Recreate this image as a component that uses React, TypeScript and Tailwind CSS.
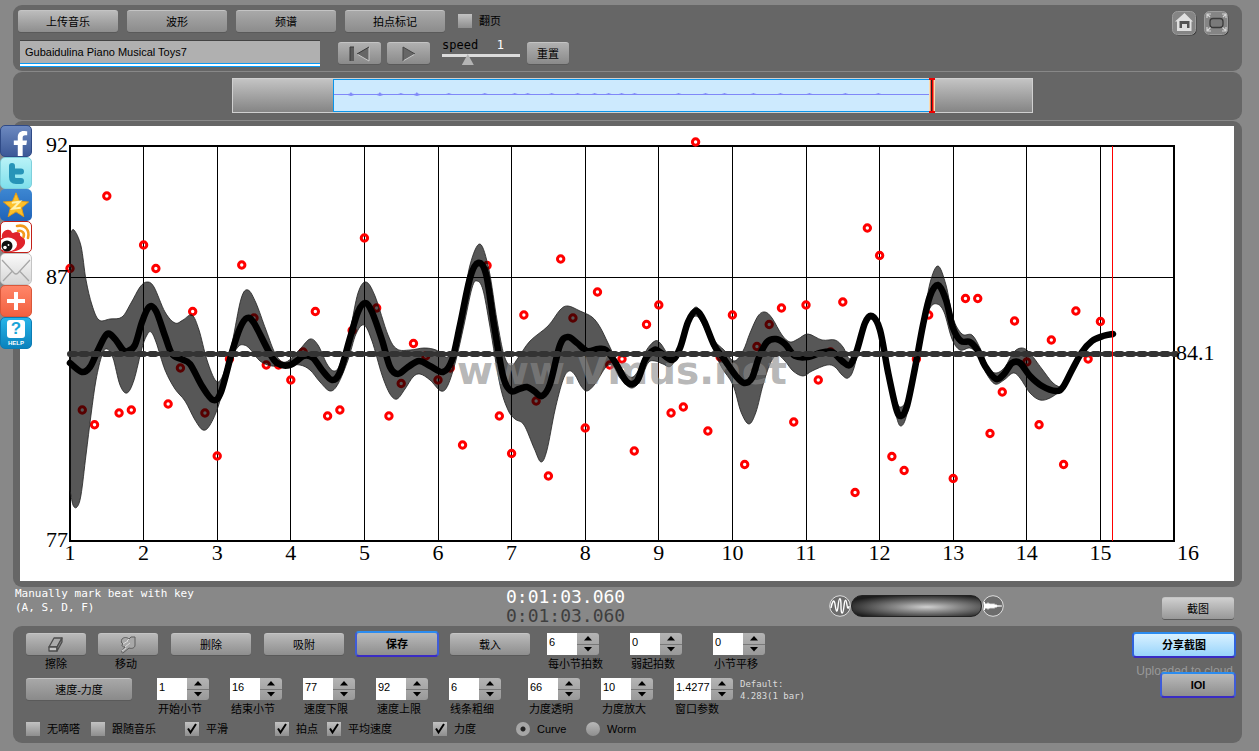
import { useState } from "react";
import type { ReactNode } from "react";
import { FaFacebookF } from "react-icons/fa";

type Point = [number, number];

type StepperField = {
  id: string;
  label: string;
  value: string;
  wide?: boolean;
};

type ToggleField = {
  id: string;
  label: string;
  checked: boolean;
  width: string;
};

// chart geometry, one bar is 73.6 units wide and holds 6 beats
const LEFT = 70;
const RIGHT = 1174;
const TOP = 146;
const BOTTOM = 541;
const BAR = (RIGHT - LEFT) / 15;

const beats: (number | null)[] = [
  268.5, 410, 424.7, 196, 413, 410, 245, 268.5, 404, 368, 311.5, 413,
  456, 359, 265, 318, 365, 365, 380, 352, 311.5, 416, 410, 330.5,
  238, 308, 416, 383.5, 343.5, 356, 380, 368, 445, null, 265.5, 416,
  453.5, 315, 401, 476, 259, 318, 428, 292, 365, 359, 451, 324.5,
  305, 413, 407, 142, 431, 357, 315, 464.5, 346.5, 324.5, 308, 422,
  305, 380, 352, 302, 492.5, 228, 255.5, 456.5, 470.5, 359, 315, null,
  478.5, 298.5, 298.5, 433.5, 392, 321, 362, 424.7, 340, 464.5, 311, 359,
  321.5
];

const tempo: Point[] = [
  [70, 363], [82, 372], [90, 367], [98, 350], [107, 334], [115, 339], [123, 350], [128, 351], [135, 345], [142, 322],
  [149, 307], [156, 311], [165, 336], [172, 354], [181, 359], [190, 364], [202, 386], [213, 400], [221, 392], [232, 352],
  [240, 328], [247, 318], [254, 323], [268, 350], [277, 363], [290, 365], [304, 356], [313, 358], [322, 370], [332, 380],
  [340, 372], [350, 338], [358, 312], [365, 303], [372, 312], [382, 340], [390, 367], [398, 374], [408, 367], [419, 361],
  [430, 366], [443, 372], [452, 360], [460, 325], [470, 278], [478, 263], [486, 274], [494, 325], [503, 376], [511, 391],
  [519, 389], [527, 387], [534, 391], [542, 396], [550, 384], [560, 345], [568, 337], [577, 343], [587, 351], [598, 349],
  [606, 350], [615, 362], [627, 382], [637, 381], [645, 360], [654, 350], [660, 352], [672, 360], [680, 348], [688, 322],
  [696, 311], [704, 321], [714, 345], [724, 359], [736, 376], [744, 383], [752, 378], [759, 357], [767, 342], [776, 339],
  [785, 344], [795, 356], [808, 357], [820, 353], [832, 352], [842, 361], [850, 365], [857, 350], [865, 323], [872, 316],
  [880, 330], [888, 372], [896, 408], [901, 416], [907, 406], [915, 368], [923, 325], [930, 296], [938, 285], [946, 300],
  [953, 328], [961, 341], [970, 342], [978, 351], [985, 366], [996, 379], [1004, 374], [1012, 363], [1020, 363], [1030, 376],
  [1042, 386], [1056, 391], [1063, 387], [1072, 370], [1082, 352], [1092, 341], [1103, 336], [1113, 334]
];

const bandTop: Point[] = [
  [70, 234], [74, 230], [81, 246], [86, 280], [92, 305], [99, 320], [110, 319], [122, 317], [131, 303], [140, 287],
  [147, 282], [154, 287], [165, 312], [175, 323], [183, 320], [192, 315], [199, 330], [207, 360], [216, 381], [223, 375],
  [232, 343], [241, 299], [248, 290], [256, 303], [266, 330], [276, 355], [286, 362], [300, 349], [310, 339], [318, 345],
  [327, 364], [334, 371], [340, 364], [350, 330], [358, 293], [366, 282], [375, 296], [388, 335], [397, 349], [410, 350],
  [424, 348], [436, 350], [448, 357], [456, 340], [462, 310], [470, 265], [480, 244], [489, 270], [497, 320], [504, 355],
  [511, 366], [518, 358], [530, 341], [548, 326], [560, 310], [568, 306], [580, 311], [592, 317], [600, 327], [608, 343],
  [618, 363], [630, 377], [638, 371], [646, 351], [655, 341], [661, 344], [672, 359], [680, 347], [688, 320], [696, 307],
  [704, 319], [714, 340], [724, 350], [734, 361], [743, 351], [750, 333], [758, 316], [765, 312], [772, 318], [782, 335],
  [790, 342], [798, 339], [808, 334], [822, 340], [835, 340], [843, 347], [850, 359], [857, 348], [865, 321], [872, 314],
  [880, 328], [888, 370], [896, 400], [901, 407], [907, 398], [915, 366], [923, 323], [930, 283], [938, 266], [946, 285],
  [953, 318], [962, 334], [972, 335], [980, 348], [988, 367], [996, 373], [1005, 367], [1013, 353], [1021, 348], [1029, 352],
  [1042, 369], [1053, 383], [1062, 388]
];

const bandBottom: Point[] = [
  [70, 490], [73, 505], [77, 507], [81, 495], [86, 455], [91, 415], [96, 380], [102, 355], [107, 349], [113, 358],
  [120, 385], [127, 393], [134, 380], [142, 348], [147, 335], [151, 332], [156, 342], [165, 370], [175, 389], [185, 401],
  [195, 420], [203, 430], [210, 425], [219, 404], [230, 362], [238, 347], [244, 345], [250, 349], [260, 361], [272, 366],
  [286, 365], [300, 365], [310, 370], [320, 382], [330, 391], [338, 384], [348, 360], [356, 334], [364, 325], [372, 341],
  [382, 375], [390, 394], [397, 399], [405, 389], [413, 377], [420, 374], [430, 380], [441, 391], [448, 385], [456, 360],
  [464, 325], [472, 288], [477, 281], [483, 290], [490, 327], [500, 385], [508, 410], [515, 419], [524, 425], [534, 448],
  [541, 462], [547, 450], [555, 410], [563, 380], [569, 371], [575, 375], [581, 386], [587, 391], [595, 384], [606, 367],
  [613, 366], [620, 378], [631, 388], [640, 381], [648, 363], [655, 361], [663, 364], [671, 366], [680, 350], [688, 326],
  [696, 316], [704, 327], [714, 351], [722, 368], [733, 385], [741, 412], [749, 424], [756, 412], [763, 385], [770, 364],
  [777, 355], [785, 361], [793, 371], [803, 376], [812, 371], [827, 365], [835, 367], [842, 375], [848, 378], [854, 368],
  [864, 328], [872, 319], [879, 332], [888, 375], [896, 415], [901, 426], [907, 414], [915, 372], [923, 329], [930, 308],
  [937, 304], [944, 312], [952, 339], [960, 350], [970, 348], [978, 355], [986, 373], [995, 384], [1004, 380], [1013, 373],
  [1020, 378], [1030, 393], [1040, 400], [1050, 398], [1062, 390]
];

const curve = (pts: Point[]) => {
  let d = "";
  for (let i = 0; i < pts.length - 1; i++) {
    const a = pts[Math.max(i - 1, 0)];
    const b = pts[i];
    const c = pts[i + 1];
    const e = pts[Math.min(i + 2, pts.length - 1)];
    d += `C${b[0] + (c[0] - a[0]) / 6} ${b[1] + (c[1] - a[1]) / 6} ${c[0] - (e[0] - b[0]) / 6} ${c[1] - (e[1] - b[1]) / 6} ${c[0]} ${c[1]}`;
  }
  return d;
};

const tempoPath = `M${tempo[0].join(" ")}${curve(tempo)}`;
const bandLow = [...bandBottom].reverse();
const bandPath = `M${bandTop[0].join(" ")}${curve(bandTop)}L${bandLow[0].join(" ")}${curve(bandLow)}Z`;

const meterFields: StepperField[] = [
  { id: "beats", label: "每小节拍数", value: "6" },
  { id: "pickup", label: "弱起拍数", value: "0" },
  { id: "shift", label: "小节平移", value: "0" }
];

const rangeFields: StepperField[] = [
  { id: "start", label: "开始小节", value: "1" },
  { id: "end", label: "结束小节", value: "16" },
  { id: "low", label: "速度下限", value: "77" },
  { id: "high", label: "速度上限", value: "92" },
  { id: "line", label: "线条粗细", value: "6" }
];

const dynamicFields: StepperField[] = [
  { id: "alpha", label: "力度透明", value: "66" },
  { id: "zoom", label: "力度放大", value: "10" },
  { id: "window", label: "窗口参数", value: "1.4277", wide: true }
];

const toggles: ToggleField[] = [
  { id: "mute", label: "无嘀嗒", checked: false, width: "w-[65px]" },
  { id: "follow", label: "跟随音乐", checked: false, width: "w-[94px]" },
  { id: "smooth", label: "平滑", checked: true, width: "w-[90px]" },
  { id: "points", label: "拍点", checked: true, width: "w-[52px]" },
  { id: "average", label: "平均速度", checked: true, width: "w-[106px]" },
  { id: "dynamics", label: "力度", checked: true, width: "w-[83px]" }
];

// [x, size] of the louder spots in the overview
const peaks: Point[] = [
  [17, 2], [46, 2], [67, 1], [83, 2], [115, 1], [151, 1], [181, 1], [194, 1], [218, 1], [244, 1],
  [261, 1], [275, 1], [288, 1], [301, 1], [345, 1], [372, 1], [391, 1], [420, 1], [447, 1], [476, 1], [512, 1], [545, 1]
];

function GreyButton({ children, className, label }: { children: ReactNode; className: string; label?: string }) {
  return (
    <button
      type="button"
      aria-label={label}
      className={`flex h-[22px] shrink-0 items-center justify-center rounded-[3px] border-t border-[#c4c4c4] bg-linear-to-b text-[11px] leading-4 text-black shadow-[0_1px_0_#5a5a5a] ${className}`}
    >
      {children}
    </button>
  );
}

function Stepper({ field }: { field: StepperField }) {
  const [value, setValue] = useState(field.value);
  const step = (by: number) => setValue(String(Number(value) + by));

  return (
    <div>
      <div className="flex h-[22px]">
        <input
          id={field.id}
          value={value}
          onChange={(e) => setValue(e.target.value)}
          className={`h-[22px] bg-white pb-1 pl-0.5 text-[11px] leading-4 text-black outline-none ${field.wide ? "w-[37px]" : "w-[30px]"}`}
        />
        <div className="flex w-[22px] flex-col overflow-hidden rounded-r-[3px] bg-linear-to-b from-[#b4b4b4] to-[#999]">
          <button type="button" aria-label={`${field.label} +`} onClick={() => step(1)} className="flex flex-1 items-center justify-center border-b border-[#787878]">
            <svg width="8" height="5"><path d="M4 0 8 4.500H0Z" /></svg>
          </button>
          <button type="button" aria-label={`${field.label} -`} onClick={() => step(-1)} className="flex flex-1 items-center justify-center">
            <svg width="8" height="5"><path d="M4 4.500 8 0H0Z" /></svg>
          </button>
        </div>
      </div>
      <label htmlFor={field.id} className="mt-px block whitespace-nowrap pl-px text-[11px] leading-4">{field.label}</label>
    </div>
  );
}

function Check({ id, label, checked }: { id: string; label: string; checked: boolean }) {
  return (
    <label htmlFor={id} className="relative flex items-center gap-[7px] whitespace-nowrap text-[11px] leading-[14px]">
      <input id={id} type="checkbox" defaultChecked={checked} className="peer h-[14px] w-[14px] appearance-none bg-linear-to-b from-[#c2c2c2] to-[#8e8e8e]" />
      <svg width="14" height="14" viewBox="0 0 14 14" className="pointer-events-none absolute left-0 top-0 hidden peer-checked:block">
        <path d="M3 6.500 5.500 10.500 11 2" fill="none" stroke="#000" strokeWidth="2" />
      </svg>
      {label}
    </label>
  );
}

function Radio({ id, label, checked }: { id: string; label: string; checked: boolean }) {
  return (
    <label htmlFor={id} className="flex w-[70px] items-center gap-[7px] text-[11px] leading-[14px]">
      <input
        id={id}
        type="radio"
        name="view"
        defaultChecked={checked}
        className="h-[14px] w-[14px] appearance-none rounded-full bg-linear-to-b from-[#b8b8b8] to-[#8e8e8e] checked:bg-[radial-gradient(circle,#222_2px,#a6a6a6_3px)]"
      />
      {label}
    </label>
  );
}

function Chart() {
  const bars = Array.from({ length: 14 }, (_, i) => i + 2);

  return (
    <svg viewBox="20 126 1214 455" className="block w-full bg-white" fontFamily="'Liberation Serif', serif" fontSize="22" role="img" aria-label="tempo curve">
      <g stroke="#000" fill="none" shapeRendering="crispEdges">
        <path d={`M${LEFT} 277.500H${RIGHT}`} />
        {bars.map((n) => (
          <path key={n} d={`M${Math.floor(LEFT + (n - 1) * BAR) + 0.5} ${TOP}V${BOTTOM}`} />
        ))}
        <rect x={LEFT} y={TOP} width={RIGHT - LEFT} height={BOTTOM - TOP} strokeWidth="2" />
      </g>
      <g fill="none" stroke="#f00" strokeWidth="3">
        {beats.map((y, i) => y !== null && <circle key={i} cx={LEFT + (i * BAR) / 6} cy={y} r="3.200" />)}
      </g>
      <path d={bandPath} fill="#000" fillOpacity="0.66" stroke="#222" strokeOpacity="0.8" />
      <text x="457" y="384" fontFamily="'DejaVu Sans', Verdana, sans-serif" fontSize="39" fontWeight="700" fill="#888" fillOpacity="0.62">www.Vmus.net</text>
      <path d={tempoPath} fill="none" stroke="#000" strokeWidth="6.500" strokeLinecap="round" strokeLinejoin="round" />
      <path d="M70 354H1176" stroke="#333" strokeWidth="6" strokeLinecap="round" strokeDasharray="5 6.500" />
      <path d="M70 354H1176" stroke="#333" strokeWidth="4" />
      <path d="M1112.500 146V541" stroke="#f00" shapeRendering="crispEdges" />
      <g textAnchor="end">
        <text x="68" y="152">92</text>
        <text x="68" y="284">87</text>
        <text x="68" y="547">77</text>
      </g>
      <text x="1176" y="360">84.1</text>
      <text x="1177" y="560">16</text>
      <g textAnchor="middle">
        <text x="70" y="560">1</text>
        {bars.map((n) => (
          <text key={n} x={LEFT + (n - 1) * BAR} y="560">{n}</text>
        ))}
      </g>
    </svg>
  );
}

function ShareBar() {
  const tile = "flex h-8 w-8 justify-center overflow-hidden rounded-[5px]";

  return (
    <nav className="absolute left-0 top-[125px] flex flex-col">
      <a href="#facebook" aria-label="Facebook" className={`${tile} items-end border border-[#2f4a86] bg-linear-to-b from-[#6d89c0] to-[#3c5997] pl-2`}>
        <FaFacebookF size={25} color="#fff" className="shrink-0" />
      </a>
      <a href="#twitter" aria-label="Twitter" className={`${tile} items-center border border-[#7ed0dc] bg-linear-to-b from-[#b8f2f7] to-[#7fe0ec]`}>
        <svg width="28" height="28" viewBox="0 0 28 28" fill="none" stroke="#2794b8" strokeWidth="6" strokeLinecap="round" strokeLinejoin="round">
          <path d="M10 7V18Q10 22 14 22H19M10 12.500H19" />
        </svg>
      </a>
      <a href="#qzone" aria-label="Qzone" className={`${tile} items-center bg-linear-to-b from-[#3d87d2] to-[#1f63b8]`}>
        <svg width="28" height="28" viewBox="0 0 30 30">
          <path d="M15 2 18.700 11 28.500 11.700 21 18 23.400 27.500 15 22.300 6.600 27.500 9 18 1.500 11.700 11.300 11Z" fill="#fdc02a" stroke="#e59a13" />
          <path d="M10.500 12.500 19 11.500 11.500 19 20 18" fill="none" stroke="#fff3b0" strokeWidth="2.200" />
        </svg>
      </a>
      <a href="#weibo" aria-label="Weibo" className={`${tile} items-center border border-[#c22018] bg-white`}>
        <svg width="30" height="30" viewBox="1 1 30 30">
          <path d="M2 17C1 12 5 8 9 9C12 9 11 12 13 12C17 10 21 11 20 14C20 16 25 16 25 20C26 26 19 30 11 31H1V17Z" fill="#e0242b" />
          <ellipse cx="8" cy="23.500" rx="9" ry="7" fill="#fff" />
          <circle cx="7" cy="25" r="5.500" fill="#111" />
          <circle cx="5" cy="26.500" r="1.800" fill="#fff" />
          <circle cx="8.500" cy="24" r="0.900" fill="#fff" />
          <path d="M17 5C25 3 30 9 28 17M18 10C22 9 25 12 23.500 16" fill="none" stroke="#f39a1c" strokeWidth="2.600" strokeLinecap="round" />
        </svg>
      </a>
      <a href="#mail" aria-label="Mail" className={`${tile} items-center border border-[#c4c4c4] bg-linear-to-b from-[#fafafa] to-[#d6d6d6]`}>
        <svg width="30" height="30" viewBox="0 0 30 30" fill="none" stroke="#a8a8a8" strokeWidth="1.300">
          <path d="M1 6 13 19Q15 21 17 19L29 6M2 27 11.500 17M28 27 18.500 17" />
        </svg>
      </a>
      <a href="#more" aria-label="More" className={`${tile} items-center border border-[#d9573a] bg-linear-to-b from-[#ff8568] to-[#f2603f]`}>
        <svg width="20" height="20" viewBox="0 0 20 20" stroke="#fff" strokeWidth="4"><path d="M10 1V19M1 10H19" /></svg>
      </a>
      <a href="#help" className={`${tile} flex-col items-center border border-[#0b7cb4] bg-linear-to-b from-[#27b4e8] to-[#0a82bd]`}>
        <span className="flex h-[18px] w-[18px] items-center justify-center rounded-[3px] bg-white text-[17px] font-bold leading-none text-[#1aa5d8]">?</span>
        <span className="mt-px text-[6px] font-bold leading-[8px] text-white">HELP</span>
      </a>
    </nav>
  );
}

export default function App() {
  const [title, setTitle] = useState("Gubaidulina Piano Musical Toys7");

  return (
    <div className="relative min-h-screen bg-[#888] pb-2 pl-[13px] pr-[17px] pt-[5px] font-['Liberation_Sans','Noto_Sans_CJK_SC',sans-serif] text-black">
      <header className="flex justify-between rounded-[9px] bg-[#666] pb-[3px] pl-[5px] pr-[13px] pt-[5px]">
        <div>
          <div className="flex items-center gap-[9px]">
            <GreyButton className="w-[100px] from-[#bcbcbc] to-[#8e8e8e] text-xs">上传音乐</GreyButton>
            <GreyButton className="w-[100px] from-[#a9a9a9] to-[#8c8c8c]">波形</GreyButton>
            <GreyButton className="w-[100px] from-[#a9a9a9] to-[#8c8c8c]">频谱</GreyButton>
            <GreyButton className="w-[100px] from-[#a9a9a9] to-[#8c8c8c]">拍点标记</GreyButton>
            <div className="pl-1">
              <Check id="turn" label="翻页" checked={false} />
            </div>
          </div>
          <div className="mt-2 flex h-7 items-start">
            <input
              aria-label="title"
              value={title}
              onChange={(e) => setTitle(e.target.value)}
              className="ml-0.5 h-[27px] w-[300px] border-b border-t border-b-[#0a9bf5] border-t-[#444] bg-[#b0b0b0] pb-[3px] pl-[5px] text-[11px] leading-4 shadow-[inset_0_-2px_0_#fff,inset_0_-3px_0_#0a9bf5] outline-none"
            />
            <div className="ml-[18px] mt-0.5 flex gap-1.5">
              <GreyButton label="rewind" className="w-[43px] from-[#b0b0b0] to-[#8a8a8a]">
                <svg width="22" height="16" viewBox="0 0 22 16">
                  <path d="M1 1H5V15H1Z" fill="#5a5a5a" />
                  <path d="M20 1V15L8 8Z" fill="#666" />
                  <path d="M8 8 20 15V1" fill="none" stroke="#c8c8c8" />
                  <path d="M1 15V1H5M20 1 8 8" fill="none" stroke="#383838" />
                </svg>
              </GreyButton>
              <GreyButton label="play" className="w-[43px] from-[#b0b0b0] to-[#8a8a8a]">
                <svg width="16" height="16" viewBox="0 0 16 16">
                  <path d="M2 1V15L14 8Z" fill="#666" />
                  <path d="M2 15 14 8" stroke="#c8c8c8" />
                  <path d="M14 8 2 1V15" fill="none" stroke="#444" />
                </svg>
              </GreyButton>
            </div>
            <div className="ml-3 w-[78px]">
              <div className="flex justify-between pr-4 font-['DejaVu_Sans_Mono',monospace] text-[12px] leading-[10px]">
                <label htmlFor="speed">speed</label>
                <output htmlFor="speed" className="text-white">1</output>
              </div>
              <input
                id="speed"
                type="range"
                min="0"
                max="3"
                step="0.1"
                defaultValue="0.9"
                className="mt-1 block h-3 w-full appearance-none bg-transparent [&::-webkit-slider-runnable-track]:-mt-[9px] [&::-webkit-slider-runnable-track]:h-[3px] [&::-webkit-slider-runnable-track]:bg-[#dcdcdc] [&::-webkit-slider-thumb]:h-[11px] [&::-webkit-slider-thumb]:w-3 [&::-webkit-slider-thumb]:appearance-none [&::-webkit-slider-thumb]:bg-[#b4b4b4] [&::-webkit-slider-thumb]:[clip-path:polygon(50%_0,100%_100%,0_100%)]"
              />
            </div>
            <GreyButton className="ml-[7px] mt-0.5 w-[42px] from-[#b0b0b0] to-[#8a8a8a]">重置</GreyButton>
          </div>
        </div>
        <div className="flex items-start gap-[7px] pt-px">
          <button type="button" aria-label="home">
            <svg width="25" height="25" viewBox="0 0 25 25">
              <rect x="1.500" y="1.500" width="23" height="23" rx="5" fill="#3c3c3c" />
              <rect x="0.500" y="0.500" width="23" height="23" rx="5" fill="#858585" stroke="#9c9c9c" />
              <path d="M12.500 2 21 10.500H19.500V20H5V10.500H3Z" fill="#e0e0e0" />
              <path d="M7.500 10H17.500V17H15V13H10V17H7.500Z" fill="#555" />
            </svg>
          </button>
          <button type="button" aria-label="full screen">
            <svg width="25" height="25" viewBox="0 0 25 25">
              <rect x="1.500" y="1.500" width="23" height="23" rx="5" fill="#3c3c3c" />
              <rect x="0.500" y="0.500" width="23" height="23" rx="5" fill="#858585" stroke="#9c9c9c" />
              <rect x="6" y="7.500" width="13" height="9" rx="3" fill="#7a7a7a" stroke="#3a3a3a" strokeWidth="1.300" />
              <path d="M3 7V3H7M18 3H22V7M22 16V20H18M7 20H3V16M3 20 6.500 16.500M22 20 18.500 16.500M22 3 19 6M3 3 6 6" fill="none" stroke="#d4d4d4" strokeWidth="1.200" />
            </svg>
          </button>
        </div>
      </header>

      <section className="mt-px rounded-[9px] bg-[#666] pb-[7px] pl-[219px] pr-[209px] pt-1.5">
        <div className="flex h-[35px] border border-[#d0d0d0] bg-linear-to-b from-[#c4c4c4] to-[#858585]">
          <div className="w-1/8" />
          <div className="relative w-3/4 border border-[#0a95ea] bg-[#cdeafe]">
            <svg viewBox="0 0 598 31" preserveAspectRatio="none" className="h-full w-full">
              <path d="M0 14.500H598" stroke="#8088f8" shapeRendering="crispEdges" />
              {peaks.map(([x, s]) => (
                <path key={x} d={`M${x - 5} 14.500 ${x - 1} 13.500 ${x} ${14 - s} ${x + 1} 13.500 ${x + 5} 14.500 ${x} ${14 + s}Z`} fill="#8088f8" />
              ))}
            </svg>
            <svg width="6" height="35" className="absolute -right-1 -top-0.5">
              <rect width="6" height="35" fill="#fbdcae" />
              <path d="M3 0V35" stroke="#e00" strokeWidth="3" />
              <path d="M2.500 2V33" stroke="#222" shapeRendering="crispEdges" />
              <path d="M0 1H6M0 34H6" stroke="#e00" strokeWidth="2" />
            </svg>
          </div>
          <div className="flex-1" />
        </div>
      </section>

      <main className="mt-px rounded-[9px] bg-[#666] pb-1.5 pl-[7px] pr-2 pt-[5px]">
        <Chart />
      </main>

      <section className="flex h-[39px] items-start pl-0.5 pr-2 font-['DejaVu_Sans_Mono',monospace]">
        <p className="w-[491px] text-[11px] leading-[14px] text-white">
          Manually mark beat with key<br />(A, S, D, F)
        </p>
        <div className="w-[323px] text-lg leading-[19px]">
          <div className="text-white">0:01:03.060</div>
          <div className="text-[#3f3f3f]">0:01:03.060</div>
        </div>
        <div className="flex items-center pt-[7px]">
          <svg width="22" height="24" viewBox="0 0 22 24">
            <circle cx="11" cy="12" r="10.300" fill="#6c6c6c" stroke="#ddd" />
            <path d="M2 14C3 8 5 4 6 10C7 17 8 20 9 13C10 2 12 2 12 12C12 22 14 21 15 12C16 4 17 5 18 11C18.500 15 19.500 15 20 12" fill="none" stroke="#fff" strokeWidth="1.400" />
          </svg>
          <input type="range" aria-label="mix" className="h-[22px] w-[131px] appearance-none rounded-full border border-[#222] bg-[radial-gradient(ellipse_at_58%_55%,#d0d0d0,#888_30%,#1c1c1c_82%)] [&::-webkit-slider-thumb]:appearance-none" />
          <svg width="22" height="24" viewBox="0 0 22 24">
            <circle cx="11" cy="12" r="10.300" fill="#6c6c6c" stroke="#ddd" />
            <path d="M2 8H3V10L4 9 5 10 6 8 7 10 8 9 9 10.500 10 9 11 10.500 12 9 13 11 14 10 15 11.300 20 11.500V12.500L15 12.700 14 14 13 13 12 15 11 13.500 10 15 9 13.500 8 15 7 14 6 16 5 14 4 15 3 14V16H2Z" fill="#fff" />
          </svg>
        </div>
        <div className="ml-auto pt-2.5 font-['Liberation_Sans','Noto_Sans_CJK_SC',sans-serif]">
          <GreyButton className="w-[72px] from-[#cfcfcf] to-[#989898]">截图</GreyButton>
        </div>
      </section>

      <footer className="flex justify-between rounded-[9px] bg-[#666] pb-[7px] pl-[13px] pr-1.5">
        <div className="pt-[7px]">
          <div className="flex items-start">
            <div className="w-[72px]">
              <GreyButton label="擦除" className="w-[60px] from-[#bababa] to-[#8e8e8e]">
                <svg width="18" height="18" viewBox="0 0 18 18" stroke="#4c4c4c" strokeWidth="1.300" strokeLinejoin="round">
                  <path d="M7 2H15L10 11H2Z" fill="#aaa" />
                  <path d="M2 11H10V15H2Z" fill="#c4c4c4" />
                  <path d="M15 2V6L10 15V11Z" fill="#888" />
                </svg>
              </GreyButton>
              <div className="mt-px w-[60px] text-center text-[11px] leading-4">擦除</div>
            </div>
            <div className="w-[73px]">
              <GreyButton label="移动" className="w-[60px] from-[#bababa] to-[#8e8e8e]">
                <svg width="18" height="18" viewBox="0 0 18 18" fill="#a8a8a8" stroke="#5c5c5c">
                  <path d="M3 3C5 1 8 1 10 3L12 1H16V9C16 12 13 13 10 12L4 17C3 17 2 16 3 15L6 11C3 11 2 9 4 8C2 7 2 5 3 3Z" />
                  <path d="M4 8 9 5M6 11 11 7M3 15 7 12M10 3 8 5" fill="none" stroke="#ddd" />
                </svg>
              </GreyButton>
              <div className="mt-px w-14 text-center text-[11px] leading-4">移动</div>
            </div>
            <div className="flex gap-[13px]">
              <GreyButton className="w-20 from-[#bababa] to-[#8e8e8e]">删除</GreyButton>
              <GreyButton className="w-20 from-[#bababa] to-[#8e8e8e]">吸附</GreyButton>
              <button type="button" className="-mx-0.5 -mt-0.5 h-[26px] w-[84px] rounded-[4px] border-2 border-b-[#3a2cc4] border-l-[#3f5cd8] border-r-[#3f5cd8] border-t-[#2b8cf0] bg-linear-to-b from-[#bababa] to-[#8e8e8e] text-[11px] font-bold leading-4">
                保存
              </button>
              <GreyButton className="w-20 from-[#bababa] to-[#8e8e8e]">载入</GreyButton>
            </div>
            <div className="ml-[17px] grid grid-cols-[83px_83px_83px]">
              {meterFields.map((field) => <Stepper key={field.id} field={field} />)}
            </div>
          </div>

          <div className="mt-1.5 flex items-start">
            <GreyButton className="w-[106px] from-[#a8a8a8] to-[#8a8a8a] text-xs">速度-力度</GreyButton>
            <div className="ml-[25px] grid grid-cols-[73px_73px_73px_73px_73px]">
              {rangeFields.map((field) => <Stepper key={field.id} field={field} />)}
            </div>
            <div className="ml-1.5 grid grid-cols-[73px_73px_66px]">
              {dynamicFields.map((field) => <Stepper key={field.id} field={field} />)}
            </div>
            <p className="font-['DejaVu_Sans_Mono',monospace] text-[9px] leading-[12px] text-[#dcdcdc]">
              Default:<br />4.283(1 bar)
            </p>
          </div>

          <div className="mt-[5px] flex">
            {toggles.map((t) => (
              <div key={t.id} className={t.width}>
                <Check id={t.id} label={t.label} checked={t.checked} />
              </div>
            ))}
            <Radio id="curve" label="Curve" checked />
            <Radio id="worm" label="Worm" checked={false} />
          </div>
        </div>

        <div className="flex flex-col items-end pt-1.5">
          <button type="button" className="h-[26px] w-[104px] rounded-[4px] border-2 border-b-[#3a2cc4] border-l-[#2f62dc] border-r-[#2f62dc] border-t-[#2b8cf0] bg-linear-to-b from-[#d8f1ff] to-[#98d4fb] text-[11px] font-bold leading-4">
            分享截图
          </button>
          <span className="mr-[3px] mt-[5px] text-xs leading-4 text-[#999]">Uploaded to cloud</span>
          <button type="button" className="relative -mt-[7px] h-[26px] w-[76px] rounded-[4px] border-2 border-b-[#3a2cc4] border-l-[#3f5cd8] border-r-[#3f5cd8] border-t-[#2b8cf0] bg-linear-to-b from-[#bababa] to-[#8e8e8e] text-[11px] font-bold leading-4">
            IOI
          </button>
        </div>
      </footer>

      <ShareBar />
    </div>
  );
}
